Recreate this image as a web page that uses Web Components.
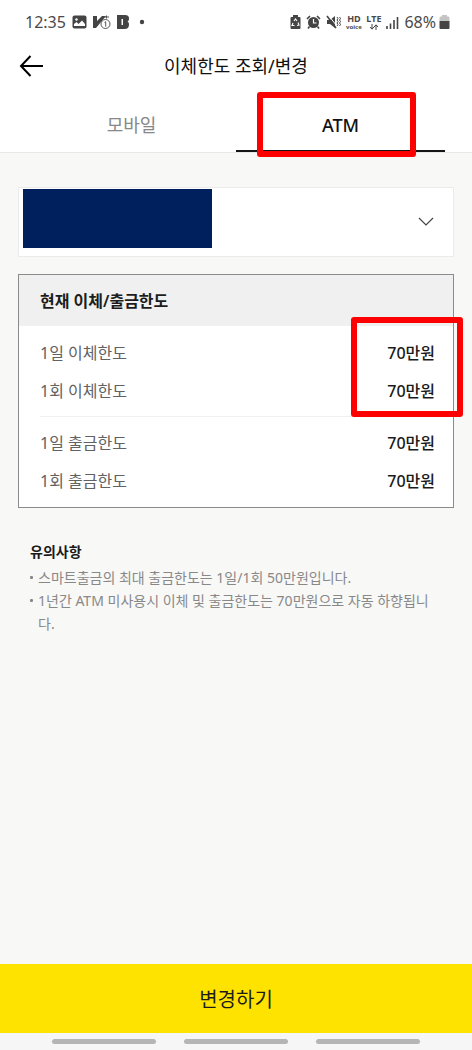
<!DOCTYPE html>
<html lang="ko">
<head>
<meta charset="utf-8">
<meta name="viewport" content="width=device-width, initial-scale=1">
<title>이체한도 조회/변경</title>
<style>
  body { margin: 0; font-family: "Noto Sans", "Noto Sans CJK KR", sans-serif; color: #1c1c1c; background: #f8f8f7; }
</style>
</head>
<body>
<limit-page></limit-page>
<script>
const define = (name, html) => customElements.define(name, class extends HTMLElement {
  constructor() {
    super();
    this.attachShadow({ mode: 'open' }).innerHTML = html;
  }
});

/* Red outline laid over the content it marks */
define('mark-frame', `
  <style>
    :host { position: absolute; box-sizing: border-box; border: 6px solid #fe0000; border-radius: 3px; pointer-events: none; z-index: 1; }
  </style>`);

define('status-bar', `
  <style>
    :host { display: flex; justify-content: space-between; align-items: center; height: 44px; padding: 0 22px 0 25px; background: #fff; color: #4a4a4a; font-size: 16px; line-height: 20px; }
    div { display: flex; align-items: center; }
    svg { display: block; flex: none; }
    .left { gap: 6px; }
    .right { gap: 5px; }
    .stack { display: flex; flex-direction: column; align-items: center; font-size: 9px; font-weight: 700; line-height: 9px; width: 15px; }
    .stack small { font-size: 6px; line-height: 8px; }
    .stack svg { margin: 1px 0; }
    .level { gap: 3px; }
  </style>
  <div class="left">
    <span>12:35</span>
    <svg width="15" height="14" viewBox="0 0 15 14"><rect x="0.5" y="0.5" width="14" height="13" rx="2" fill="#444"/><circle cx="4.500" cy="4.500" r="1.200" fill="#fff"/><path d="M2 11V9l2.500-2 2 2L10 5.500 13 9v2z" fill="#fff"/></svg>
    <svg width="18" height="16" viewBox="0 0 18 16"><path d="M0 2h4v5l5-5h4L3 14H0z" fill="#444"/><circle cx="12.500" cy="10" r="4.500" fill="#fff" stroke="#555"/><path d="M11.500 8.500l1.200-.8v5M11 3h5M13.500 1.500v3" fill="none" stroke="#555"/></svg>
    <svg width="12" height="16" viewBox="0 0 12 16"><path d="M0 1h8c3 0 4 1.500 4 3.500 0 1.500-.5 2.500-1.500 3 1 .5 1.500 1.500 1.500 3 0 3-1.500 4.500-4.500 4.500H0z" fill="#444"/><path d="M4.500 5h1.500v6H4.500z" fill="#fff"/></svg>
    <svg width="22" height="6" viewBox="0 0 22 6"><circle cx="7" cy="3" r="2.200" fill="#444"/></svg>
  </div>
  <div class="right">
    <svg width="11" height="14" viewBox="0 0 11 14"><path d="M3 0h5v2h1.500q1 0 1 1v10q0 1-1 1h-8q-1 0-1-1V3q0-1 1-1H3z" fill="#444"/><path d="M4 6l1.500-2L7 6M8 7.500l1 2.500-2 .5M4.500 10.500H2L3 8" fill="none" stroke="#fff" stroke-width="1.100"/></svg>
    <svg width="15" height="14" viewBox="0 0 15 14"><circle cx="7.500" cy="7.500" r="5.500" fill="#444"/><path d="M1 4l3-3M14 4l-3-3M3.500 11.500L2 13.500M11.500 11.500l1.500 2" stroke="#444" stroke-width="1.600"/><path d="M7.500 4v4h3" fill="none" stroke="#fff" stroke-width="1.200"/></svg>
    <svg width="15" height="14" viewBox="0 0 15 14"><path d="M1 5h3l5-4v12L4 9H1z" fill="#444"/><path d="M2 0l9 11" stroke="#fff" stroke-width="1"/><path d="M1 1l9 12" stroke="#444" stroke-width="1.500"/><path d="M11 2l1 1.500-1 1.500 1 1.500-1 1.500 1 1.500-1 1.500M13.500 2l1 1.500-1 1.500 1 1.500-1 1.500 1 1.500-1 1.500" fill="none" stroke="#444" stroke-width="1"/></svg>
    <span class="stack">HD<small>voice</small></span>
    <span class="stack">LTE<svg width="10" height="6" viewBox="0 0 10 6"><path d="M3 0v5M1 3l2 2.200L5 3M7 6V1M5 3l2-2.200L9 3" fill="none" stroke="#444"/></svg></span>
    <svg width="13" height="13" viewBox="0 0 13 13"><path d="M1 13v-3M4.500 13V7.500M8 13V4M11.500 13V1" stroke="#444" stroke-width="1.600"/></svg>
    <div class="level"><span>68%</span>
    <svg width="11" height="14" viewBox="0 0 11 14"><path d="M3 0h5v1.500h1.500q1 0 1 1V6H.5V2.500q0-1 1-1H3z" fill="#c4c4c4"/><path d="M.5 6h10v7q0 1-1 1h-8q-1 0-1-1z" fill="#444"/></svg></div>
  </div>`);

define('page-header', `
  <style>
    :host { display: grid; grid-template-columns: 28px 1fr 28px; align-items: center; height: 44px; padding: 0 18px; background: #fff; }
    button { border: 0; background: none; padding: 0; height: 28px; }
    svg { display: block; }
    h1 { margin: 0; font-size: 18px; font-weight: 400; line-height: 28px; text-align: center; color: #111; }
  </style>
  <button type="button" aria-label="뒤로"><svg width="28" height="28" viewBox="0 0 28 28"><path d="M25 14H3M12.500 4L3 14l9.500 10" fill="none" stroke="#000" stroke-width="2"/></svg></button>
  <h1><slot></slot></h1>`);

define('tab-strip', `
  <style>
    :host { display: block; padding: 10px 27px 0; background: #fff; border-bottom: 1px solid #e8e8e8; }
    nav { display: grid; grid-template-columns: 1fr 1fr; }
    button { position: relative; height: 54px; border: 0; border-bottom: 2px solid transparent; padding: 2px 0 0; background: none; font: inherit; font-size: 18px; line-height: 24px; color: #888; }
    button[aria-selected=true] { color: #111; font-weight: 500; border-color: #151515; }
    mark-frame { inset: -6px 29px -7px 21px; }
  </style>
  <nav role="tablist">
    <button type="button" role="tab" aria-selected="false">모바일</button>
    <button type="button" role="tab" aria-selected="true">ATM<mark-frame></mark-frame></button>
  </nav>`);

define('account-picker', `
  <style>
    :host { display: block; position: relative; }
    select { appearance: none; display: block; box-sizing: border-box; width: 100%; height: 70px; border: 1px solid #ebebeb; border-radius: 0; background: #fff; font: inherit; }
    .cover { position: absolute; left: 5px; top: 2px; width: 189px; height: 59px; background: #001f5d; pointer-events: none; }
    svg { position: absolute; right: 20px; top: 30px; pointer-events: none; }
  </style>
  <select aria-label="계좌 선택"><option></option></select>
  <span class="cover"></span>
  <svg width="16" height="10" viewBox="0 0 16 10"><path d="M1 1l7 7 7-7" fill="none" stroke="#444" stroke-width="1.200"/></svg>`);

define('limit-card', `
  <style>
    :host { display: block; border: 1px solid #8b8b8b; background: #fff; }
    table, caption, tbody { display: block; }
    caption { padding: 1px 21px 0; background: #f0f0f0; text-align: left; font-size: 16px; font-weight: 600; line-height: 50px; }
    tbody { position: relative; margin: 0 18px 0 21px; padding: 8px 0 6px; }
    tbody + tbody { border-top: 1px solid #f0f0f0; padding: 7px 0; }
    tr { display: flex; justify-content: space-between; font-size: 16px; line-height: 38px; }
    th, td { padding: 0; }
    th { font-weight: 400; color: #626262; }
    td { font-weight: 500; color: #1a1a1a; }
    mark-frame { inset: -9px -28px -1px auto; width: 112px; }
  </style>
  <table>
    <caption>현재 이체/출금한도</caption>
    <tbody>
      <tr><th scope="row">1일 이체한도</th><td>70만원</td></tr>
      <tr><th scope="row">1회 이체한도</th><td>70만원<mark-frame></mark-frame></td></tr>
    </tbody>
    <tbody>
      <tr><th scope="row">1일 출금한도</th><td>70만원</td></tr>
      <tr><th scope="row">1회 출금한도</th><td>70만원</td></tr>
    </tbody>
  </table>`);

define('notice-list', `
  <style>
    :host { display: block; padding: 0 18px 0 12px; font-size: 14px; line-height: 23px; color: #888; }
    h2 { margin: 0; font-size: 14px; font-weight: 600; line-height: 28px; color: #1a1a1a; }
    ul { margin: 0; padding: 0; list-style: none; }
    li { display: grid; grid-template-columns: 8px 1fr; }
    li::before { content: ""; width: 3px; height: 3px; margin-top: 10px; border-radius: 1px; background: #888; }
  </style>
  <h2>유의사항</h2>
  <ul>
    <li>스마트출금의 최대 출금한도는 1일/1회 50만원입니다.</li>
    <li>1년간 ATM 미사용시 이체 및 출금한도는 70만원으로 자동 하향됩니다.</li>
  </ul>`);

define('action-button', `
  <style>
    :host { display: block; }
    button { display: block; width: 100%; height: 69px; border: 0; padding: 2px 0 0; background: #ffe300; color: #1c1c1c; font: inherit; font-size: 20px; line-height: 28px; }
  </style>
  <button type="button"><slot></slot></button>`);

define('gesture-bar', `
  <style>
    :host { display: flex; justify-content: center; align-items: center; gap: 28px; height: 17px; background: #f6f6f6; }
    i { width: 22%; height: 5px; border-radius: 3px; background: #b5b5b5; }
  </style>
  <i></i><i></i><i></i>`);

define('limit-page', `
  <style>
    :host { display: flex; flex-direction: column; min-height: 100vh; }
    main { flex: 1; display: flex; flex-direction: column; padding: 34px 18px; }
    limit-card { margin: 17px 0 30px; }
  </style>
  <status-bar></status-bar>
  <page-header>이체한도 조회/변경</page-header>
  <tab-strip></tab-strip>
  <main>
    <account-picker></account-picker>
    <limit-card></limit-card>
    <notice-list></notice-list>
  </main>
  <action-button>변경하기</action-button>
  <gesture-bar></gesture-bar>`);
</script>
</body>
</html>
